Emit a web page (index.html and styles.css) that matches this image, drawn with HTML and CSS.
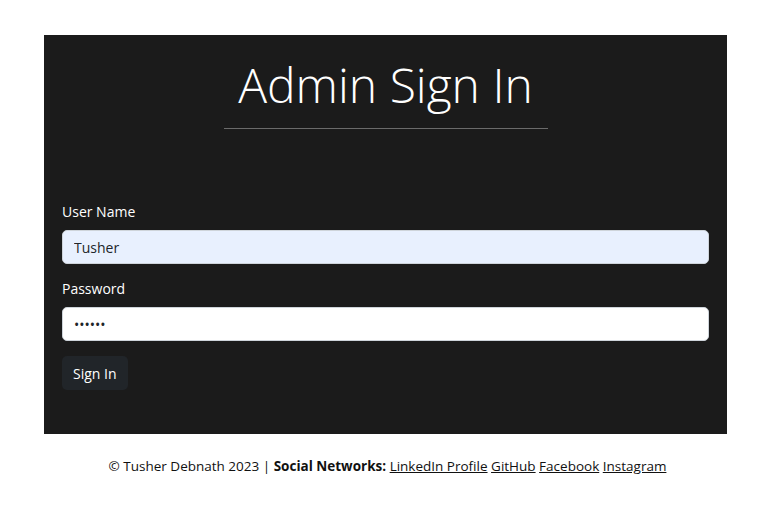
FILE: index.html
```html
<!DOCTYPE html>
<html lang="en">
<head>
<meta charset="utf-8">
<title>Admin Sign In</title>
<link rel="stylesheet" href="styles.css">
</head>
<body>
<main class="panel">
  <header class="panel-head">
    <h1 class="title">Admin Sign In</h1>
    <hr class="rule">
  </header>
  <form class="form">
    <label class="label" for="user">User Name</label>
    <input class="field field-filled" id="user" type="text" value="Tusher">
    <label class="label" for="pass">Password</label>
    <input class="field" id="pass" type="password" value="tusher">
    <button class="btn" type="button">Sign In</button>
  </form>
</main>
<footer class="footer">
  © Tusher Debnath 2023 | <strong>Social Networks:</strong>
  <a href="#">LinkedIn Profile</a> <a href="#">GitHub</a> <a href="#">Facebook</a> <a href="#">Instagram</a>
</footer>
</body>
</html>
```
FILE: styles.css
```css
* { box-sizing: border-box; }
body {
  margin: 0;
  background: #fff;
  font-family: "Open Sans", "Noto Sans", sans-serif;
  color: #212529;
}
.panel {
  width: 683px;
  margin: 35px 0 0 44px;
  background: #1b1b1b;
  padding: 18px 18px 44px;
  color: #fff;
}
.panel-head {
  display: flex;
  flex-direction: column;
  align-items: center;
}
.title {
  margin: 0;
  font-size: 48px;
  font-weight: 300;
  line-height: 64px;
  color: #fff;
}
.rule {
  width: 324px;
  margin: 11px 0 0;
  border: 0;
  border-top: 1px solid #6b6b6b;
}
.form {
  display: flex;
  flex-direction: column;
  align-items: flex-start;
  margin-top: 73px;
}
.label {
  font-size: 14px;
  line-height: 20px;
  margin-bottom: 8px;
}
.label + .field { margin-top: 0; }
.field {
  width: 100%;
  height: 34px;
  border: 1px solid #ced4da;
  border-radius: 5px;
  background: #fff;
  padding: 0 11px;
  font: 14px "Open Sans", sans-serif;
  color: #212529;
  margin-bottom: 16px;
}
.field-filled { background: #e8f0fe; margin-bottom: 15px; }
.btn {
  height: 34px;
  padding: 0 11px;
  border: 0;
  border-radius: 5px;
  background: #212529;
  color: #fff;
  font: 14px "Open Sans", sans-serif;
  margin-top: -1px;
}
.footer {
  text-align: center;
  font-size: 13.5px;
  line-height: 20px;
  margin-top: 22px;
  color: #111;
}
.footer a { color: #111; }
.footer strong { font-weight: 700; }
```
